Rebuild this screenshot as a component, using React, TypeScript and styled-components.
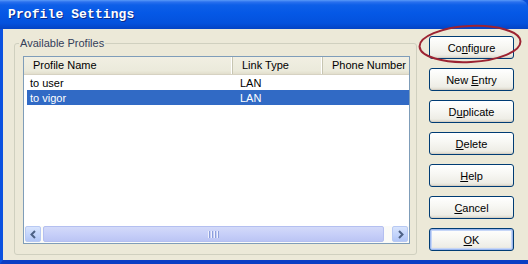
import React from 'react';
import styled, {createGlobalStyle} from "styled-components";

const GlobalStyle = createGlobalStyle`
  html, body {
    margin: 0;
    padding: 0;
    background: #ffffff;
  }
  body {
    font-family: "Liberation Sans", Arial, sans-serif;
    font-size: 11px;
  }
`

type Profile = { name: string, link: string, phone: string }

const profiles: Array<Profile> = [
    {name: "to user", link: "LAN", phone: ""},
    {name: "to vigor", link: "LAN", phone: ""},
]

// label text + index of the mnemonic letter
const buttons: Array<{ label: string, key: number, isDefault?: boolean }> = [
    {label: "Configure", key: 2},
    {label: "New Entry", key: 4},
    {label: "Duplicate", key: 1},
    {label: "Delete", key: 0},
    {label: "Help", key: 0},
    {label: "Cancel", key: 0},
    {label: "OK", key: 0, isDefault: true},
]

const Mnemonic = ({label, index}: { label: string, index: number }) => (
    <span>
        {label.slice(0, index)}
        <u>{label[index]}</u>
        {label.slice(index + 1)}
    </span>
)

const App = () => {
    return (
        <>
            <GlobalStyle/>
            <Window>
                <TitleBar>
                    <Title>Profile Settings</Title>
                </TitleBar>
                <Body>
                    <GroupBox>
                        <Legend>Available Profiles</Legend>
                        <ListView>
                            <Header>
                                <HeaderCell $width={209}>Profile Name</HeaderCell>
                                <HeaderCell $width={90}>Link Type</HeaderCell>
                                <HeaderCell $width={100}>Phone Number</HeaderCell>
                            </Header>
                            <Rows>
                                {profiles.map((p, index) => (
                                    <Row key={index} $selected={index === 1}>
                                        <Cell $width={206}>{p.name}</Cell>
                                        <Cell $width={90}>{p.link}</Cell>
                                        <Cell $width={80}>{p.phone}</Cell>
                                    </Row>
                                ))}
                            </Rows>
                            <ScrollBar>
                                <ArrowButton>
                                    <svg width="9" height="9" viewBox="0 0 9 9">
                                        <path d="M6 1 L2.5 4.5 L6 8" fill="none" stroke="#4d6185" strokeWidth="2"/>
                                    </svg>
                                </ArrowButton>
                                <Track>
                                    <Thumb>
                                        <Grip>
                                            {[0, 1, 2, 3].map(i => <GripLine key={i}/>)}
                                        </Grip>
                                    </Thumb>
                                </Track>
                                <ArrowButton>
                                    <svg width="9" height="9" viewBox="0 0 9 9">
                                        <path d="M3 1 L6.5 4.5 L3 8" fill="none" stroke="#4d6185" strokeWidth="2"/>
                                    </svg>
                                </ArrowButton>
                            </ScrollBar>
                        </ListView>
                    </GroupBox>
                    <ButtonColumn>
                        {buttons.map((b, index) => (
                            <Button key={index} $isDefault={b.isDefault}>
                                <Mnemonic label={b.label} index={b.key}/>
                            </Button>
                        ))}
                        <Highlight width="106" height="42" viewBox="0 0 106 42">
                            <ellipse cx="53" cy="21" rx="50.5" ry="18" fill="none"
                                     stroke="#9c2332" strokeWidth="2" transform="rotate(-3 53 21)"/>
                        </Highlight>
                    </ButtonColumn>
                </Body>
            </Window>
        </>
    );
};

export default App;

const Window = styled.div`
  width: 528px;
  height: 264px;
  display: flex;
  flex-direction: column;
  overflow: hidden;
  background: #0a4fd8;
`

const TitleBar = styled.div`
  height: 29px;
  flex-shrink: 0;
  display: flex;
  align-items: center;
  padding-left: 8px;
  border-top-right-radius: 8px;
  background: linear-gradient(180deg, #5a9af8 0, #2a70ee 2px, #0e5fe8 5px, #0558e6 45%, #0452dd 80%, #0443c4 100%);
`

const Title = styled.span`
  font-family: "Liberation Mono", "DejaVu Sans Mono", monospace;
  font-weight: bold;
  font-size: 13px;
  color: #ffffff;
  text-shadow: 1px 1px 0 #0a2a8a;
  letter-spacing: 0.1px;
`

const Body = styled.div`
  flex: 1;
  display: flex;
  align-items: flex-start;
  gap: 12px;
  background: #ece9d8;
  border-left: 3px solid #0b52e0;
  border-bottom: 4px solid #0a3fc4;
  padding: 7px 0 0 11px;
`

const GroupBox = styled.fieldset`
  margin: 1px 0 0 0;
  padding: 0 6px 10px 8px;
  border: 1px solid #d0d0bf;
  border-radius: 3px;
  width: 387px;
  min-width: 0;
  min-inline-size: 0;
  flex-shrink: 0;
`

const Legend = styled.legend`
  margin-left: -4px;
  padding: 0 1px;
  font-size: 11px;
  line-height: 13px;
  color: #34405a;
`

const ListView = styled.div`
  margin-top: 6px;
  height: 186px;
  border: 1px solid #7f9db9;
  background: #ffffff;
  display: flex;
  flex-direction: column;
  overflow: hidden;
`

const Header = styled.div`
  height: 18px;
  flex-shrink: 0;
  display: flex;
  overflow: hidden;
  background: linear-gradient(180deg, #f1efe2 0%, #ebeadb 80%, #e2decd 100%);
  border-bottom: 1px solid #d6d2c2;
  box-sizing: border-box;
`

const HeaderCell = styled.div<{ $width: number }>`
  flex: 0 0 ${props => props.$width}px;
  padding-left: 9px;
  line-height: 17px;
  color: #000000;
  white-space: nowrap;
  box-sizing: border-box;
  border-right: 1px solid #c7c5b2;
  box-shadow: inset -1px 0 0 #ffffff;
`

const Rows = styled.div`
  flex: 1;
  overflow: hidden;
`

const Row = styled.div<{ $selected?: boolean }>`
  height: 15px;
  margin-left: 3px;
  display: flex;
  align-items: center;
  background: ${props => props.$selected ? "#316ac5" : "transparent"};
  color: ${props => props.$selected ? "#ffffff" : "#000000"};
`

const Cell = styled.div<{ $width: number }>`
  flex: 0 0 ${props => props.$width}px;
  padding-left: 3px;
  box-sizing: border-box;
  white-space: nowrap;

  & + & {
    padding-left: 7px;
  }
`

const ScrollBar = styled.div`
  height: 17px;
  flex-shrink: 0;
  display: flex;
  background: #fbfbf8;
`

const ArrowButton = styled.div`
  width: 16px;
  height: 16px;
  margin: 0 1px;
  flex-shrink: 0;
  display: flex;
  align-items: center;
  justify-content: center;
  border: 1px solid #b8c9f3;
  border-radius: 2px;
  box-sizing: border-box;
  background: linear-gradient(180deg, #d8e4fd 0%, #c1d3fb 60%, #b2c6f6 100%);
`

const Track = styled.div`
  flex: 1;
  display: flex;
  padding: 0 7px 1px 1px;
`

const Thumb = styled.div`
  flex: 1;
  height: 16px;
  display: flex;
  align-items: center;
  justify-content: center;
  border: 1px solid #b4bff0;
  border-radius: 2px;
  box-sizing: border-box;
  background: linear-gradient(180deg, #d3daf9 0%, #c6cef8 55%, #bbc5f4 100%);
`

const Grip = styled.div`
  display: flex;
  gap: 1px;
`

const GripLine = styled.div`
  width: 1px;
  height: 7px;
  background: #eef0fc;
  box-shadow: 1px 0 0 #8c9fdc;
  margin-right: 1px;
`

const ButtonColumn = styled.div`
  position: relative;
  display: flex;
  flex-direction: column;
  gap: 9px;
`

const Button = styled.div<{ $isDefault?: boolean }>`
  width: 85px;
  height: 23px;
  box-sizing: border-box;
  display: flex;
  align-items: center;
  justify-content: center;
  border: 1px solid #003c74;
  border-radius: 3px;
  font-size: 11px;
  color: #000000;
  background: linear-gradient(180deg, #ffffff 0%, #f8f8f4 40%, #eeede6 85%, #dcd8cb 100%);
  box-shadow: ${props => props.$isDefault
          ? "inset 0 0 0 1px #9cb7ee, inset 0 0 0 2px #c6d6f7"
          : "inset 0 -1px 0 #d6d0c5"};
`

const Highlight = styled.svg`
  position: absolute;
  left: -12px;
  top: -13px;
  pointer-events: none;
`
